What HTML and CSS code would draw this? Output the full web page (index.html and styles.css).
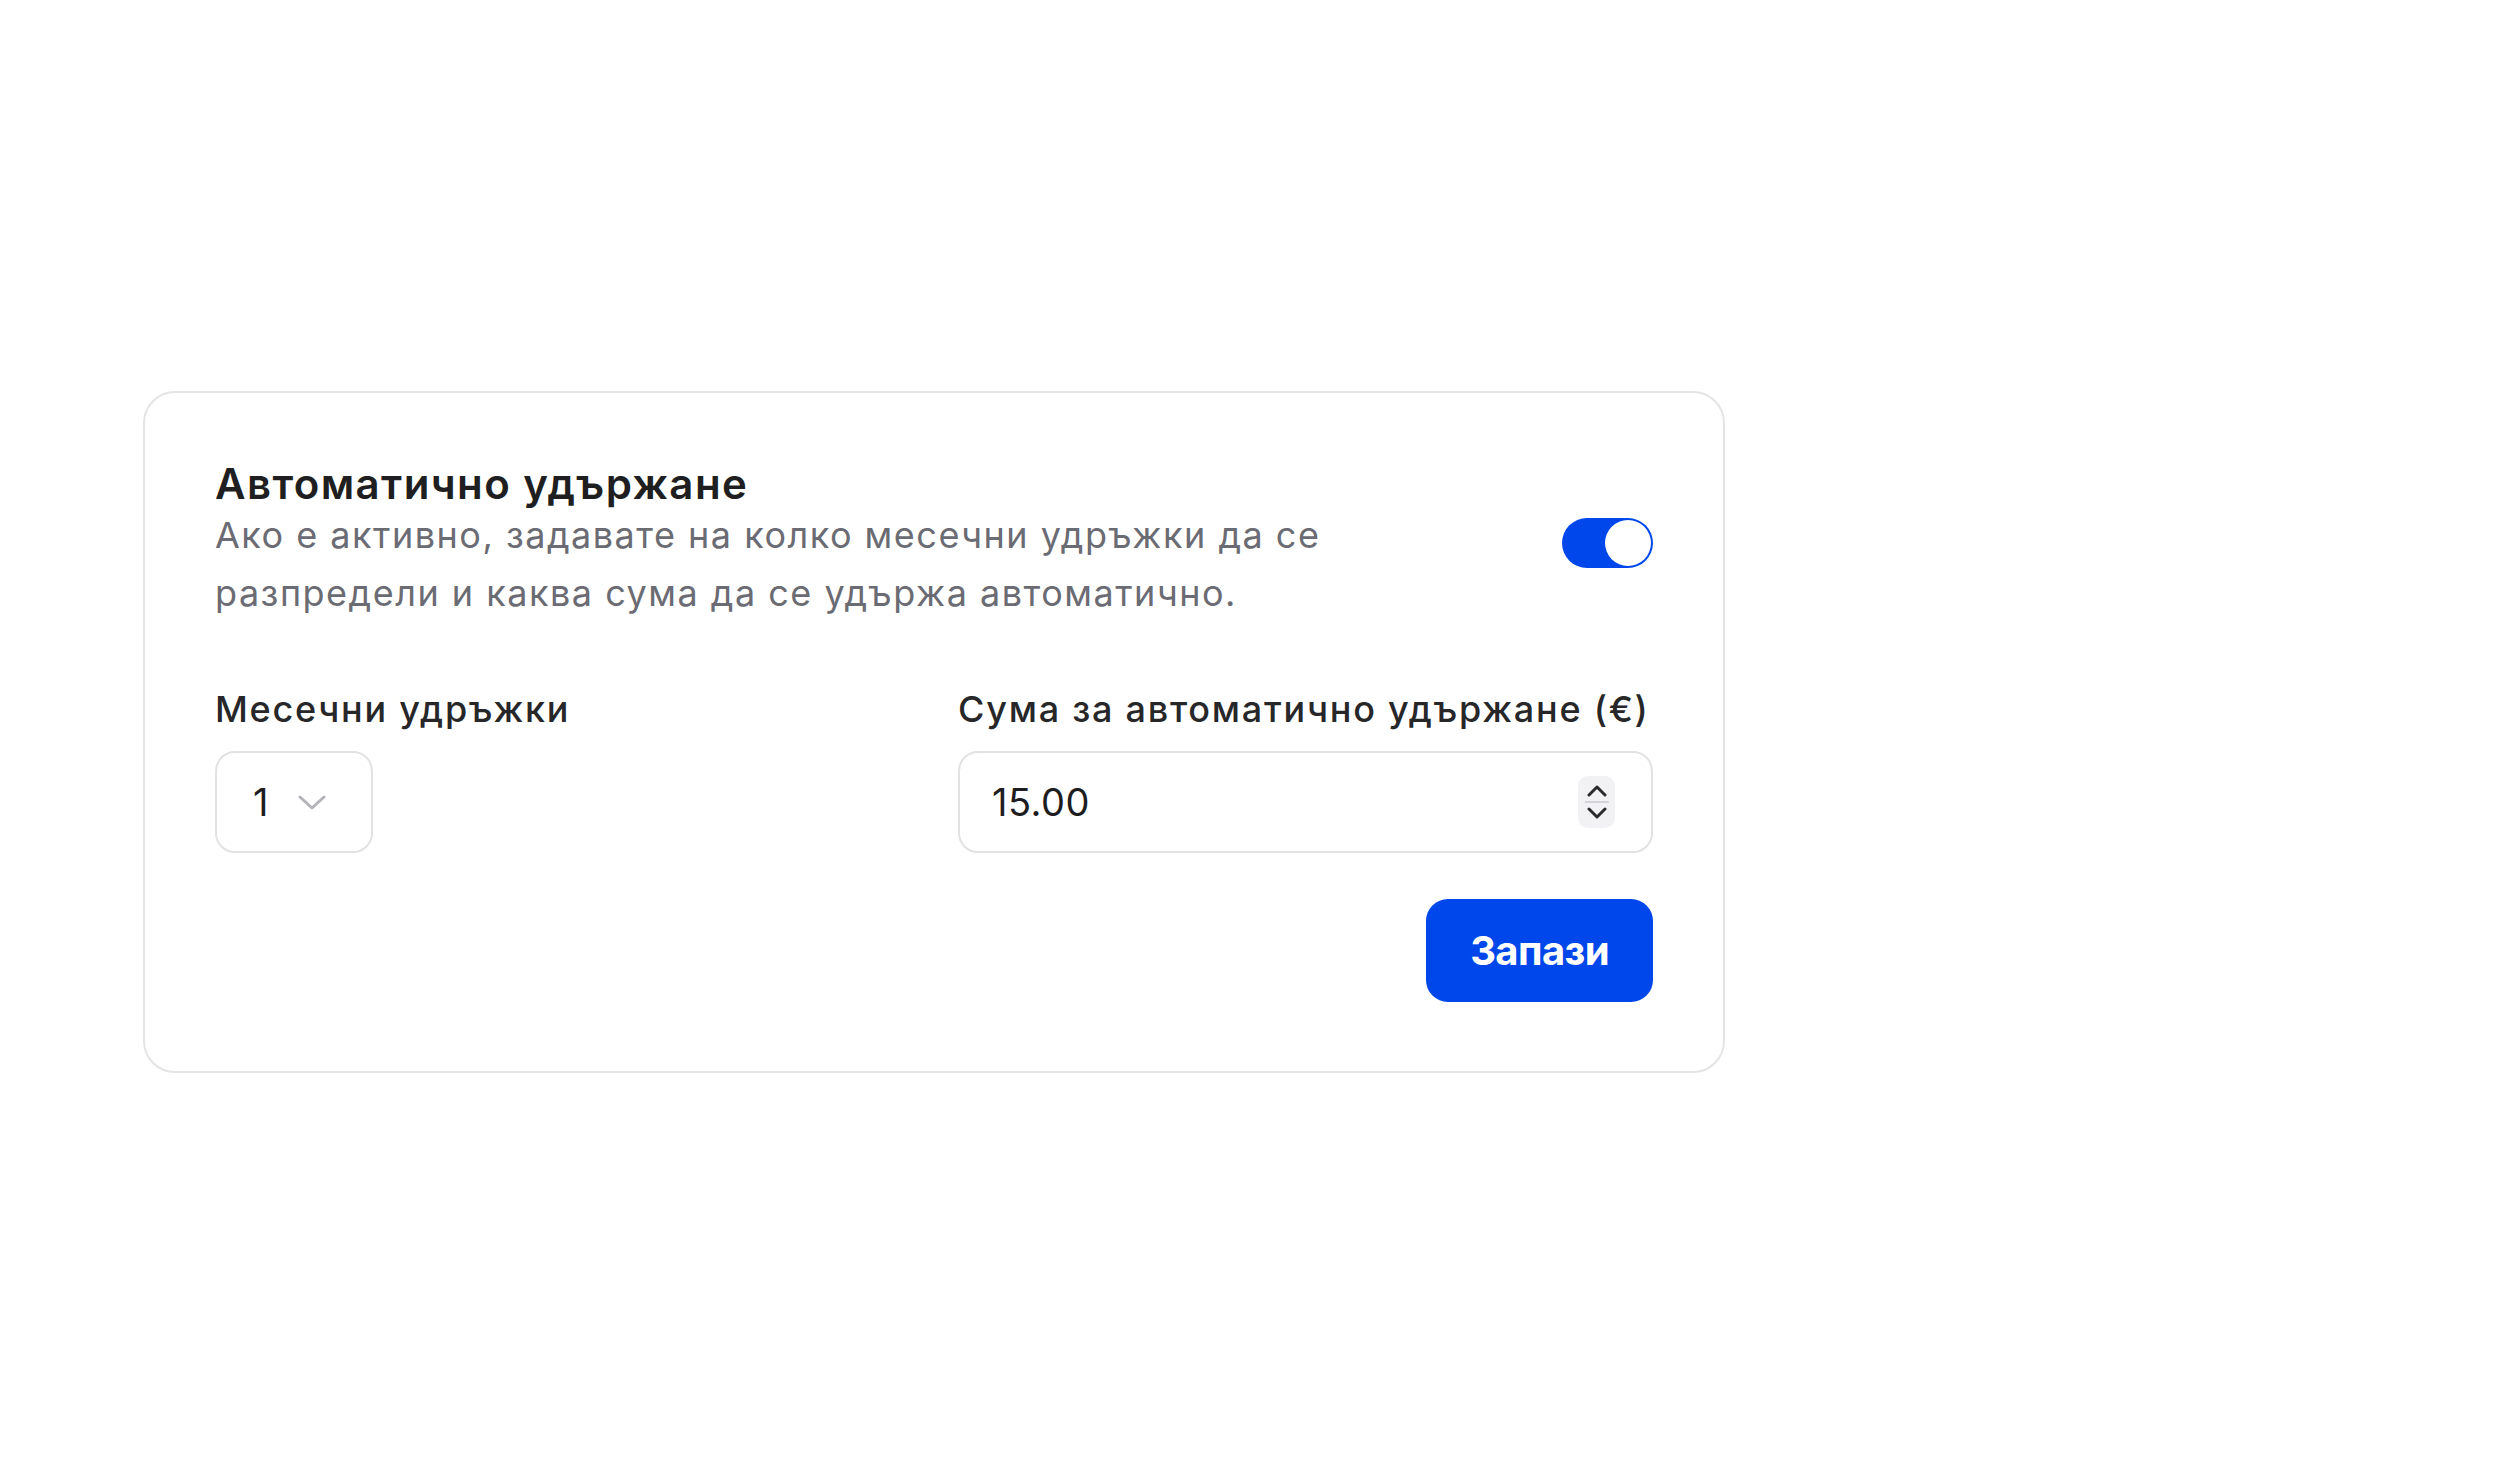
FILE: index.html
```html
<!DOCTYPE html>
<html lang="bg">

<head>
	<meta charset="UTF-8">
	<title>Автоматично удържане</title>
	<link rel="stylesheet" href="styles.css">
</head>

<body>
	<div class="page">
		<section class="card">
			<div class="card-head">
				<div class="head-text">
					<h2 class="card-title">Автоматично удържане</h2>
					<p class="card-desc">Ако е активно, задавате на колко месечни удръжки да се разпредели и каква сума да се удържа автоматично.</p>
				</div>
				<label class="switch">
					<input type="checkbox" checked>
					<span class="track"><span class="knob"></span></span>
				</label>
			</div>

			<div class="fields">
				<div class="field">
					<label class="field-label">Месечни удръжки</label>
					<div class="select-box">
						<span class="select-value">1</span>
						<svg class="select-arrow" width="28" height="16" viewBox="0 0 28 16">
							<path d="M2 2 L14 13 L26 2" fill="none" stroke="#b3b3b8" stroke-width="3" stroke-linecap="round" stroke-linejoin="round" />
						</svg>
					</div>
				</div>
				<div class="field">
					<label class="field-label">Сума за автоматично удържане (€)</label>
					<div class="number-box">
						<span class="number-value">15.00</span>
						<span class="spinner">
							<svg width="22" height="12" viewBox="0 0 22 12">
								<path d="M3 10 L11 2 L19 10" fill="none" stroke="#2b2b2e" stroke-width="3" stroke-linecap="round" stroke-linejoin="round" />
							</svg>
							<span class="spinner-line"></span>
							<svg width="22" height="12" viewBox="0 0 22 12">
								<path d="M3 2 L11 10 L19 2" fill="none" stroke="#2b2b2e" stroke-width="3" stroke-linecap="round" stroke-linejoin="round" />
							</svg>
						</span>
					</div>
				</div>
			</div>

			<div class="actions">
				<button class="save-btn">Запази</button>
			</div>
		</section>
	</div>
</body>

</html>
```

FILE: styles.css
```css
body {
	font-family: Inter, "Noto Sans", "Liberation Sans", sans-serif;
	margin: 0;
	padding: 0;
	background-color: #fff;
	color: #222224;
}

.page {
	padding: 391px 0 0 143px;
}

.card {
	box-sizing: border-box;
	width: 1582px;
	border: 2px solid #e4e4e7;
	border-radius: 32px;
	padding: 71px 70px 69px 70px;
	background-color: #fff;
}

.card-head {
	display: flex;
	align-items: center;
	justify-content: space-between;
	gap: 48px;
}

.card-title {
	margin: 0;
	font-size: 42px;
	line-height: 40px;
	font-weight: 600;
	letter-spacing: 1.4px;
	color: #1f1f21;
}

.card-desc {
	margin: 2px 0 0 0;
	max-width: 1200px;
	font-size: 36px;
	line-height: 58px;
	letter-spacing: 1.5px;
	color: #6b6b73;
}

/* превключвател */
.switch {
	flex-shrink: 0;
	cursor: pointer;
}

	.switch input {
		display: none;
	}

.track {
	display: flex;
	justify-content: flex-end;
	align-items: center;
	box-sizing: border-box;
	width: 91px;
	height: 50px;
	padding: 2px;
	border-radius: 25px;
	background-color: #0047eb;
}

.knob {
	width: 46px;
	height: 46px;
	border-radius: 50%;
	background-color: #fff;
}

.fields {
	display: grid;
	grid-template-columns: 1fr 1fr;
	gap: 48px;
	margin-top: 63px;
}

.field-label {
	display: block;
	font-size: 36px;
	line-height: 48px;
	font-weight: 500;
	letter-spacing: 1.75px;
	color: #27272a;
	margin-bottom: 18px;
}

.select-box,
.number-box {
	box-sizing: border-box;
	display: flex;
	align-items: center;
	height: 102px;
	border: 2px solid #e2e2e5;
	border-radius: 20px;
	background-color: #fff;
	font-size: 38px;
	color: #1d1d1f;
}

.select-box {
	width: 158px;
	padding: 0 0 0 36px;
	gap: 30px;
}

.select-arrow {
	margin-top: 2px;
}

.number-box {
	justify-content: space-between;
	padding: 0 36px 0 32px;
}

.number-value {
	letter-spacing: 0.5px;
}

.spinner {
	display: flex;
	flex-direction: column;
	align-items: center;
	justify-content: center;
	gap: 4px;
	width: 37px;
	height: 52px;
	border-radius: 10px;
	background-color: #f2f2f4;
}

.spinner-line {
	width: 24px;
	height: 2px;
	background-color: #d4d4d8;
}

.actions {
	display: flex;
	justify-content: flex-end;
	margin-top: 46px;
}

.save-btn {
	height: 103px;
	padding: 0 44px;
	border: none;
	border-radius: 22px;
	background-color: #0047eb;
	color: #fff;
	font-family: inherit;
	font-size: 40px;
	font-weight: 700;
	letter-spacing: -0.6px;
	cursor: pointer;
}
```
